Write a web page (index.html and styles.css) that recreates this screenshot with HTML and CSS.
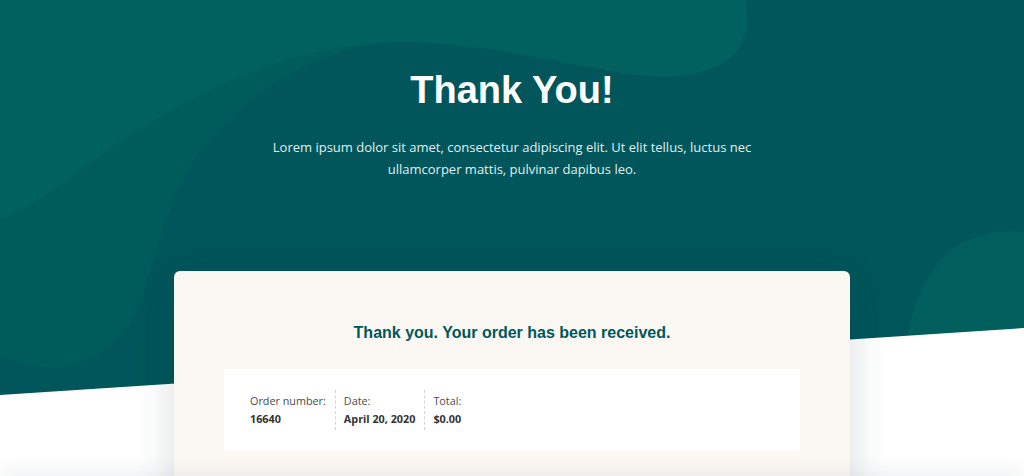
FILE: index.html
```html
<!DOCTYPE html>
<html lang="en">
<head>
<meta charset="utf-8">
<title>Thank You</title>
<link rel="stylesheet" href="styles.css">
</head>
<body>
<section class="hero">
  <svg class="hero-bg" viewBox="0 0 1024 476" preserveAspectRatio="none" aria-hidden="true">
    <rect x="0" y="0" width="1024" height="476" fill="#00565A"/>
    <path d="M0,0 H400 L379,43 C300,55 232,105 190,165 C160,215 152,285 130,322 C110,352 82,368 50,367 C30,366 12,360 0,356 Z" fill="#005C5B"/>
    <path d="M0,0 H745 C752,30 742,58 712,68 C690,78 660,78 630,74 C560,64 470,38 379,43 C280,50 200,92 130,135 C82,166 40,206 0,220 Z" fill="#01615F"/>
    <path d="M1024,232 C992,229 962,238 945,256 C925,276 912,305 906,345 L1024,345 Z" fill="#005E5C"/>
    <path d="M0,395 L1024,328 L1024,476 L0,476 Z" fill="#ffffff"/>
  </svg>
  <div class="hero-content">
    <h1 class="title">Thank You!</h1>
    <p class="intro">Lorem ipsum dolor sit amet, consectetur adipiscing elit. Ut elit tellus, luctus nec ullamcorper mattis, pulvinar dapibus leo.</p>
    <div class="card">
      <h2 class="card-title">Thank you. Your order has been received.</h2>
      <ul class="overview">
        <li class="overview-item">
          <span class="label">Order number:</span>
          <strong class="value">16640</strong>
        </li>
        <li class="overview-item">
          <span class="label">Date:</span>
          <strong class="value">April 20, 2020</strong>
        </li>
        <li class="overview-item">
          <span class="label">Total:</span>
          <strong class="value">$0.00</strong>
        </li>
      </ul>
    </div>
  </div>
</section>
<section class="below"></section>
</body>
</html>
```

FILE: styles.css
```css
html, body {
  margin: 0;
  padding: 0;
  background: #ffffff;
}

body {
  font-family: "Open Sans", "Liberation Sans", sans-serif;
  overflow: hidden;
}

.hero {
  position: relative;
  height: 476px;
}

.hero-bg {
  position: absolute;
  top: 0;
  left: 0;
  width: 100%;
  height: 476px;
  display: block;
}

.hero-content {
  position: relative;
  z-index: 1;
  display: flex;
  flex-direction: column;
  align-items: center;
  padding-top: 67px;
}

.title {
  margin: 0;
  font-family: "Liberation Sans", Arial, sans-serif;
  font-weight: 700;
  font-size: 38px;
  line-height: 46px;
  color: #ffffff;
  text-align: center;
}

.intro {
  margin: 23px 0 0;
  max-width: 480px;
  font-size: 13px;
  line-height: 22px;
  color: #e3eeee;
  text-align: center;
}

.card {
  margin-top: 91px;
  width: 676px;
  box-sizing: border-box;
  padding: 52px 50px 50px;
  background: #fbf8f3;
  border-radius: 6px;
  box-shadow: 0 10px 40px rgba(20, 50, 60, 0.16);
}

.card-title {
  margin: 0;
  font-family: "Liberation Sans", Arial, sans-serif;
  font-weight: 700;
  font-size: 16px;
  line-height: 20px;
  color: #00575a;
  text-align: center;
}

.overview {
  list-style: none;
  margin: 26px 0 0;
  padding: 21px 26px;
  background: #ffffff;
  display: flex;
}

.overview-item {
  display: flex;
  flex-direction: column;
  padding: 2px 9px 2px 8px;
  border-right: 1px dashed #d4d4d4;
  font-size: 10.8px;
  line-height: 18px;
}

.overview-item:first-child {
  padding-left: 0;
}

.overview-item:last-child {
  border-right: none;
}

.label {
  color: #4a4a4a;
}

.value {
  color: #333333;
  font-weight: 700;
}

.below {
  position: relative;
  z-index: 2;
  height: 200px;
  background: #ffffff;
  box-shadow: 0 -4px 18px rgba(20, 40, 50, 0.07);
}
```
